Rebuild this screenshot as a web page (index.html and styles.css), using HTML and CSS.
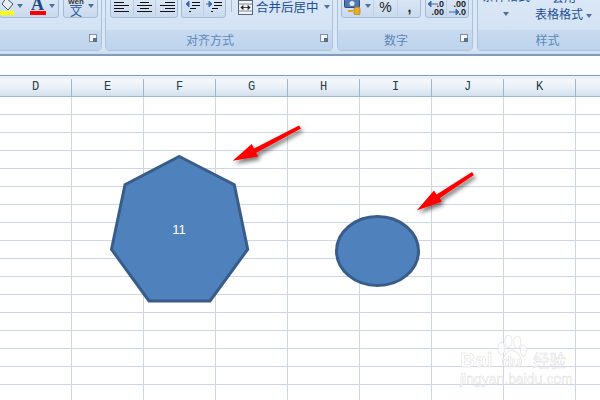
FILE: index.html
```html
<!DOCTYPE html>
<html lang="zh">
<head>
<meta charset="utf-8">
<title>Excel</title>
<link rel="stylesheet" href="styles.css">
</head>
<body>
<div class="app">
  <div class="ribbon">
    <section class="group g-font">
      <div class="tools">
        <div class="btns b-color">
          <span class="tool t-fill"><svg width="14" height="18" viewBox="0 0 14 18"><path d="M6 1l7 6-5 6-6-6z" fill="#e9eef5" stroke="#44546a"/><rect y="14" width="14" height="4" fill="#ffff00"/></svg></span>
          <span class="arrow"></span>
          <span class="tool t-a"><span class="letter">A</span><i class="redbar"></i></span>
          <span class="arrow"></span>
        </div>
        <div class="btns b-wen">
          <span class="tool t-wen"><span class="wen">wén</span><span class="wen-zi">文</span></span>
          <span class="arrow"></span>
        </div>
      </div>
      <div class="label"><i class="launch"></i></div>
    </section>
    <section class="group g-align">
      <div class="tools">
        <div class="btns b-align">
          <span class="tool t-line"><svg width="15" height="15" viewBox="0 0 15 15"><path d="M0 1.500h15M0 4.500h10M0 7.500h15M0 10.500h10M0 13.500h15" stroke="#111"/></svg></span>
          <span class="tool t-line"><svg width="15" height="15" viewBox="0 0 15 15"><path d="M0 1.500h15M3 4.500h9M0 7.500h15M3 10.500h9M0 13.500h15" stroke="#111"/></svg></span>
          <span class="tool t-line"><svg width="15" height="15" viewBox="0 0 15 15"><path d="M0 1.500h15M5 4.500h10M0 7.500h15M5 10.500h10M0 13.500h15" stroke="#111"/></svg></span>
        </div>
        <div class="btns b-indent">
          <span class="tool t-ind"><svg width="18" height="15" viewBox="0 0 18 15"><path d="M7 1.500h10M9 4.500h8M9 7.500h8M7 10.500h6M6 13.500h2" stroke="#111"/><path d="M6 6H3M3 6l3-3v6z" fill="#3b6cb4" stroke="#3b6cb4"/></svg></span>
          <span class="tool t-ind"><svg width="18" height="15" viewBox="0 0 18 15"><path d="M7 1.500h10M9 4.500h8M9 7.500h8M7 10.500h6M6 13.500h2" stroke="#111"/><path d="M1 6h3M7 6L4 3v6z" fill="#3b6cb4" stroke="#3b6cb4"/></svg></span>
        </div>
        <i class="sep"></i>
        <div class="merge">
          <svg width="15" height="15" viewBox="0 0 15 15"><rect x=".5" y=".5" width="14" height="14" fill="#f2f5f9" stroke="#55677a"/><path d="M1 4h13M1 11h13" stroke="#77889a"/><path d="M3 7.500h9M3 7.500l2-2v4zM12 7.500l-2-2v4z" fill="#222" stroke="#222" stroke-width=".8"/></svg>
          <span class="merge-text">合并后居中</span>
          <span class="arrow"></span>
        </div>
      </div>
      <div class="label"><span>对齐方式</span><i class="launch"></i></div>
    </section>
    <section class="group g-num">
      <div class="tools">
        <div class="btns b-num">
          <span class="tool t-money"><svg width="17" height="16" viewBox="0 0 17 16"><rect x=".5" y=".5" width="15" height="8" rx="1" fill="#4d78b4" stroke="#2c4a78"/><ellipse cx="8" cy="4.500" rx="2.500" ry="2.500" fill="#dfe8f3"/><path d="M4 12h5" stroke="#e8a11b" stroke-width="2"/><rect x="10" y="8" width="6" height="8" rx="2" fill="#e8b020" stroke="#9a6a0c" stroke-width=".6"/></svg></span>
          <span class="arrow"></span>
          <span class="tool t-sym">%</span>
          <span class="tool t-sym t-comma">,</span>
        </div>
        <div class="btns b-dec">
          <span class="tool t-dec"><span class="dec-top">.0</span><span class="dec-bot">.00</span><svg class="dec-arr" width="10" height="6" viewBox="0 0 10 6"><path d="M0 3l3-3v6zM3 3h7" fill="#3b6cb4" stroke="#3b6cb4"/></svg></span>
          <span class="tool t-dec"><span class="dec-top">.00</span><span class="dec-bot">.0</span><svg class="dec-arr dec-arr2" width="10" height="6" viewBox="0 0 10 6"><path d="M10 3L7 0v6zM0 3h7" fill="#3b6cb4" stroke="#3b6cb4"/></svg></span>
        </div>
      </div>
      <div class="label"><span>数字</span><i class="launch"></i></div>
    </section>
    <section class="group g-style">
      <div class="tools">
        <div class="style-btn sb-cond"><span class="st-text">条件格式</span><span class="arrow"></span></div>
        <div class="style-btn sb-table"><span class="st-text st-short">套用</span><span class="st-text">表格格式<span class="arrow"></span></span></div>
      </div>
      <div class="label"><span>样式</span></div>
    </section>
  </div>
  <div class="formula"></div>
  <div class="heads">
    <span class="head">D</span><span class="head">E</span><span class="head">F</span><span class="head">G</span><span class="head">H</span><span class="head">I</span><span class="head">J</span><span class="head">K</span><span class="head h-last"></span>
  </div>
  <div class="sheet">
    <svg class="canvas" width="600" height="303" viewBox="0 97 600 303">
      <defs>
        <filter id="sh" x="-30%" y="-30%" width="160%" height="170%">
          <feDropShadow dx="2" dy="3" stdDeviation="2" flood-color="#000" flood-opacity=".55"/>
        </filter>
      </defs>
      <polygon class="shape" points="179.300,156.500 234.300,184.700 247.700,249.300 210,301 149,301 111.500,249.300 125,184.700"/>
      <text class="shape-text" x="179" y="234" text-anchor="middle">11</text>
      <ellipse class="shape" cx="377.500" cy="251" rx="41" ry="34.500"/>
      <path class="red" filter="url(#sh)" d="M299 125.500L301 128.500 256 153 258.500 156.500 232.700 160.700 251.700 144 254 148.500z"/>
      <path class="red" filter="url(#sh)" d="M472 172L474 175 440 198 441.700 201.700 416.700 210.500 434 190.500 436.500 194.500z"/>
    </svg>
    <div class="mark">
      <svg class="paw" width="30" height="33" viewBox="0 0 34 32" preserveAspectRatio="none"><g stroke="#e2e2e2"><ellipse cx="5" cy="13" rx="4" ry="6" fill="#fff"/><ellipse cx="13" cy="6" rx="4" ry="6" fill="#fff"/><ellipse cx="23" cy="7" rx="4" ry="6" fill="#fff"/><ellipse cx="30" cy="15" rx="3.500" ry="5.500" fill="#fff"/><path d="M17 15c-5 0-11 6-11 11 0 4 5 5 11 4 6 1 11 0 11-4 0-5-6-11-11-11z" fill="#fff"/></g></svg>
      <div class="mark-main"><span class="mark-bai">Bai</span><span class="mark-du">du</span><span class="mark-zh">经验</span></div>
      <div class="mark-url">jingyan.baidu.com</div>
    </div>
  </div>
</div>
</body>
</html>
```
FILE: styles.css
```css
* { box-sizing: border-box; }
html, body { margin: 0; padding: 0; }
body { width: 600px; height: 400px; overflow: hidden; background: #fff; font-family: "Noto Sans CJK SC", "Liberation Sans", sans-serif; }
.app { width: 600px; height: 400px; overflow: hidden; display: flex; flex-direction: column; }

/* ribbon: starts above the top edge because the source image is cropped */
.ribbon { flex: none; height: 56px; display: flex; gap: 4px; overflow: hidden;
  background: linear-gradient(#dbe7f5, #dbe7f5 90%, #cddcec); border-bottom: 2px solid #7f9cb8; }
.group { flex: none; height: 61px; margin-top: -10px; border: 1px solid #a9c2df; border-radius: 4px; background: #d6e4f4; display: flex; flex-direction: column; }
.g-font { width: 106px; margin-left: -4px; }
.g-align { width: 228px; margin-left: -1px; }
.g-num { width: 136px; }
.g-style { width: 140px; border-right: 0; }
.tools { flex: none; height: 39px; display: flex; align-items: flex-end; padding-bottom: 12px; background: linear-gradient(#dbe8f7, #d4e3f4); }
.label { flex: 1; background: linear-gradient(#c8daf0, #bdd3ec); display: flex; align-items: center; justify-content: center; padding-bottom: 2px; color: #5b88bd; font-size: 12px; line-height: 17px; position: relative; }
.g-align .label, .g-num .label { padding-right: 18px; }
.launch { position: absolute; right: 4px; top: 4px; width: 8px; height: 8px; border: 1px solid #7f8ea0; background: #f3f6fa; }
.launch::after { content: ""; position: absolute; right: -1px; bottom: -1px; width: 4px; height: 4px; background: #5f6f83; }

.btns { flex: none; height: 30px; display: flex; align-items: flex-end; border: 1px solid #a6bcd6; border-radius: 3px; background: linear-gradient(#e4edf8, #c9daee); padding-bottom: 1px; }
.tool { flex: none; display: flex; align-items: flex-end; justify-content: center; position: relative; }
.arrow { flex: none; width: 0; height: 0; border: 3.500px solid transparent; border-top: 4px solid #4f6f9a; border-bottom: 0; }

.b-color { width: 60px; margin-left: 2px; }
.b-color .arrow { margin: 0 0 8px 3px; }
.t-fill { width: 14px; padding-bottom: 1px; }
.t-a { width: 17px; margin-left: 6px; flex-direction: column; align-items: center; }
.letter { font: bold 18px/14px "Liberation Serif", serif; color: #20477f; }
.redbar { display: block; width: 16px; height: 4px; background: #f00; margin-bottom: 1px; }
.b-wen { width: 35px; margin-left: 4px; }
.t-wen { width: 22px; margin-left: 1px; padding-bottom: 1px; flex-direction: column; align-items: center; }
.wen { font: bold 8px/7px "Liberation Sans", sans-serif; color: #333; }
.wen-zi { font-size: 12px; line-height: 9px; color: #2b5aa0; border-top: 1px solid #2b5aa0; }
.b-wen .arrow { margin: 0 0 8px 1px; }

.b-align { width: 68px; margin-left: 4px; }
.t-line { width: 22.600px; padding-bottom: 3px; border-right: 1px solid #bccfe5; }
.t-line:last-child { border-right: 0; }
.b-indent { width: 45px; margin-left: 3px; }
.t-ind { width: 21.500px; padding-bottom: 3px; }
.t-ind:first-child { border-right: 1px solid #bccfe5; }
.sep { flex: none; width: 1px; height: 22px; background: #a9bfd8; margin: 0 0 6px 5px; }
.merge { flex: none; display: flex; align-items: center; height: 20px; margin-left: 6px; margin-bottom: 1px; }
.merge svg { margin-right: 3px; }
.merge-text { font-size: 12.500px; line-height: 14px; color: #1f4f94; }
.merge .arrow { margin-left: 5px; }

.b-num { width: 80px; margin-left: 3px; }
.t-money { width: 21px; padding-bottom: 1px; }
.b-num .arrow { margin: 0 2px 8px 2px; }
.t-sym { width: 24px; font: 14px/18px "Liberation Sans", sans-serif; color: #222; border-left: 1px solid #c0d2e6; }
.t-comma { font-weight: bold; }
.b-dec { width: 44px; margin-left: 4px; }
.t-dec { width: 21px; height: 24px; display: block; font: bold 9px/8px "Liberation Sans", sans-serif; color: #222; }
.t-dec:first-child { border-right: 1px solid #bccfe5; }
.dec-top { position: absolute; right: 2px; top: 8px; }
.dec-bot { position: absolute; right: 2px; top: 16px; }
.dec-arr { position: absolute; left: 2px; top: 9px; }
.dec-arr2 { top: 17px; }

.g-style .tools { padding-bottom: 9px; }
.style-btn { flex: none; color: #1f4f94; font-size: 12px; line-height: 14px; }
.sb-cond { width: 50px; margin-left: 3px; display: flex; flex-direction: column; align-items: center; }
.sb-cond .arrow { margin: 9px 0 5px; }
.sb-table { margin-left: 4px; display: flex; flex-direction: column; }
.st-short { padding-left: 17px; margin-bottom: 3px; }
.st-text { white-space: nowrap; }
.st-text .arrow { display: inline-block; margin-left: 3px; vertical-align: middle; }

/* formula bar */
.formula { flex: none; height: 20px; background: #fff; border-bottom: 1px solid #7c9dbb; }
.heads { flex: none; height: 21px; display: flex; padding-top: 3px; background: #e8eff7; }
.head { flex: none; width: 72px; height: 18px; display: flex; align-items: center; justify-content: center; font: 12px/17px "Liberation Mono", monospace; color: #1f3e46; background: linear-gradient(#f4f8fc, #e9f0f7 50%, #d3e0ee); border-right: 1px solid #9fb6d0; border-bottom: 1px solid #9db8d2; }
.h-last { width: 25px; border-right: 0; }

/* sheet */
.sheet { flex: 1; position: relative; background-color: #fff;
  background-image: repeating-linear-gradient(to bottom, transparent 0 17px, #cdd6e6 17px 18px), repeating-linear-gradient(to right, transparent 0 71px, #cdd6e6 71px 72px); }
.canvas { position: absolute; left: 0; top: 0; }
.shape { fill: #4f81bd; stroke: #385d8a; stroke-width: 3; }
.shape-text { fill: #fff; font: 13px "Liberation Sans", sans-serif; }
.red { fill: #fe0000; }

.mark { position: absolute; left: 458px; top: 237px; width: 125px; height: 60px; opacity: .8; }
.paw { position: absolute; left: 39px; top: 1px; }
.mark-main { position: absolute; left: 2px; top: 13px; display: flex; align-items: baseline; white-space: nowrap; color: #fff; -webkit-text-stroke: .6px #dadada; font: bold 21px/26px "Liberation Sans", sans-serif; }
.mark-du { font-size: 15px; margin: 0 12px 0 10px; }
.mark-zh { font: 16.500px/26px "Noto Sans CJK SC", sans-serif; }
.mark-url { position: absolute; left: 2px; top: 38px; color: #fff; -webkit-text-stroke: .5px #d6d6d6; font: 14px/15px "Liberation Sans", sans-serif; white-space: nowrap; }
```
